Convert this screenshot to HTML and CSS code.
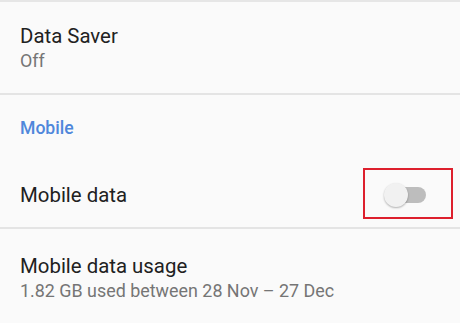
FILE: index.html
```html
<!DOCTYPE html>
<html>
<head>
<meta charset="utf-8">
<link rel="stylesheet" href="styles.css">
</head>
<body>
<div class="list">
  <div class="item saver">
    <div class="title">Data Saver</div>
    <div class="summary">Off</div>
  </div>
  <div class="divider"></div>
  <div class="category">Mobile</div>
  <div class="item switch-row">
    <div class="title">Mobile data</div>
    <div class="switch">
      <div class="track"></div>
      <div class="thumb"></div>
      <div class="highlight"></div>
    </div>
  </div>
  <div class="divider"></div>
  <div class="item usage">
    <div class="title">Mobile data usage</div>
    <div class="summary">1.82 GB used between 28 Nov – 27 Dec</div>
  </div>
</div>
</body>
</html>
```
FILE: styles.css
```css
html, body {
  margin: 0;
  padding: 0;
  background: #fafafa;
}
body {
  font-family: Roboto, "Noto Sans", sans-serif;
  width: 460px;
  height: 323px;
  overflow: hidden;
}
.list {
  border-top: 2px solid #e6e6e6;
}
.item {
  padding-left: 20px;
  box-sizing: border-box;
}
.title {
  font-size: 20.4px;
  line-height: 24px;
  color: #212121;
}
.summary {
  font-size: 17.9px;
  line-height: 22px;
  color: #757575;
  margin-top: 2px;
}
.saver {
  height: 91px;
  padding-top: 22px;
}
.divider {
  height: 2px;
  background: #e4e4e4;
}
.category {
  height: 68px;
  box-sizing: border-box;
  padding: 23px 0 0 20px;
  font-size: 17.6px;
  line-height: 20px;
  font-weight: 500;
  color: #4f87db;
}
.switch-row {
  height: 64px;
  display: flex;
  align-items: center;
  justify-content: space-between;
  padding-right: 34px;
}
.switch {
  position: relative;
  width: 42px;
  height: 24px;
}
.track {
  position: absolute;
  right: 0;
  top: 4px;
  width: 36px;
  height: 16px;
  border-radius: 8px;
  background: #bdbdbd;
}
.thumb {
  position: absolute;
  left: 0;
  top: 0;
  width: 24px;
  height: 24px;
  border-radius: 50%;
  background: #f1f1f1;
  box-shadow: 0 1px 2px rgba(0,0,0,0.3);
}
.highlight {
  position: absolute;
  left: -21px;
  top: -15px;
  width: 90px;
  height: 51px;
  box-sizing: border-box;
  border: 2.5px solid #dd1f2d;
}
.usage {
  height: 94px;
  padding-top: 25px;
}
```
